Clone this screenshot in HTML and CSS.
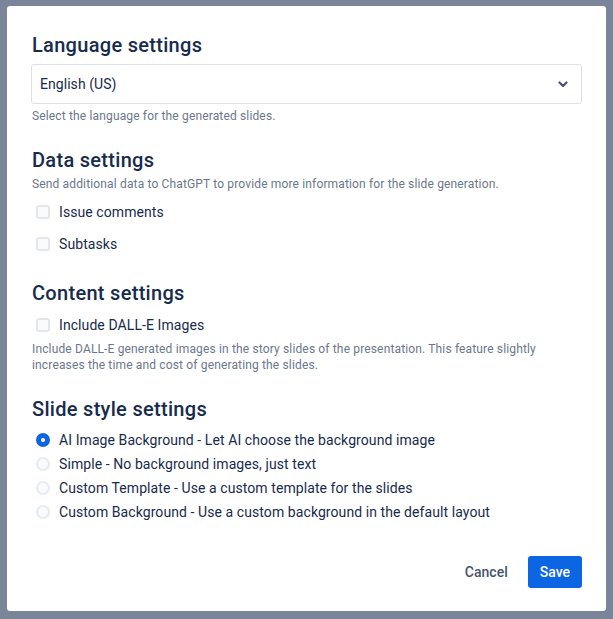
FILE: index.html
```html
<!DOCTYPE html>
<html lang="en">
<head>
<meta charset="utf-8">
<title>Settings</title>
<link rel="stylesheet" href="styles.css">
</head>
<body>
<div class="modal">
  <div class="modal-body">
    <h2 class="section-title first">Language settings</h2>
    <div class="select">
      <span class="select-value">English (US)</span>
      <svg class="chevron" width="10" height="7" viewBox="0 0 10 7"><path d="M1.5 1.5 L5 5 L8.5 1.5" fill="none" stroke="#44546f" stroke-width="2.2" stroke-linecap="round" stroke-linejoin="round"/></svg>
    </div>
    <p class="helper">Select the language for the generated slides.</p>

    <h2 class="section-title">Data settings</h2>
    <p class="desc">Send additional data to ChatGPT to provide more information for the slide generation.</p>
    <div class="checks">
      <label class="check-row"><span class="box"></span><span class="label">Issue comments</span></label>
      <label class="check-row"><span class="box"></span><span class="label">Subtasks</span></label>
    </div>

    <h2 class="section-title content">Content settings</h2>
    <div class="checks tight">
      <label class="check-row"><span class="box"></span><span class="label">Include DALL-E Images</span></label>
    </div>
    <p class="desc no-gap">Include DALL-E generated images in the story slides of the presentation. This feature slightly increases the time and cost of generating the slides.</p>

    <h2 class="section-title">Slide style settings</h2>
    <div class="radios">
      <label class="radio-row"><span class="radio checked"></span><span class="label">AI Image Background - Let AI choose the background image</span></label>
      <label class="radio-row"><span class="radio"></span><span class="label">Simple - No background images, just text</span></label>
      <label class="radio-row"><span class="radio"></span><span class="label">Custom Template - Use a custom template for the slides</span></label>
      <label class="radio-row"><span class="radio"></span><span class="label">Custom Background - Use a custom background in the default layout</span></label>
    </div>
  </div>
  <div class="modal-footer">
    <button class="btn btn-subtle">Cancel</button>
    <button class="btn btn-primary">Save</button>
  </div>
</div>
</body>
</html>
```
FILE: styles.css
```css
* { box-sizing: border-box; }

html, body {
  margin: 0;
  padding: 0;
}

body {
  background: #7a8599;
  font-family: Roboto, "Noto Sans", "Liberation Sans", sans-serif;
  color: #172b4d;
  width: 613px;
  height: 619px;
  overflow: hidden;
}

.modal {
  margin: 6px 0 0 7px;
  width: 599px;
  height: 605px;
  background: #ffffff;
  border-radius: 3px;
  padding: 27px 24px 0 24px;
  display: flex;
  flex-direction: column;
}

.section-title {
  margin: 24px 0 0 0;
  font-size: 20px;
  line-height: 24px;
  font-weight: 500;
  color: #172b4d;
  padding-left: 1px;
  letter-spacing: 0.3px;
}

.section-title.first { margin-top: 0; }
.section-title.content { margin-top: 21px; }

.select {
  margin-top: 7px;
  height: 40px;
  border: 1px solid #dcdfe4;
  border-radius: 3px;
  background: #ffffff;
  display: flex;
  align-items: center;
  justify-content: space-between;
  padding: 0 13px 0 8px;
}

.select-value {
  font-size: 14px;
  color: #172b4d;
  letter-spacing: 0.05px;
}

.chevron { display: block; }

.helper, .desc {
  margin: 4px 0 0 0;
  font-size: 12px;
  line-height: 16px;
  color: #6b778c;
  padding-left: 1px;
  letter-spacing: 0.15px;
}

.desc.no-gap { margin-top: 0; }

.checks {
  margin-top: 4px;
  display: flex;
  flex-direction: column;
}

.check-row {
  height: 32px;
  display: flex;
  align-items: center;
  padding-left: 5px;
  gap: 9px;
}

.box {
  width: 14px;
  height: 14px;
  border: 2px solid #e4e6ea;
  background: #fafbfc;
  border-radius: 3px;
  flex: none;
}

.label {
  font-size: 14px;
  line-height: 20px;
  color: #172b4d;
  letter-spacing: 0.08px;
}

.radios {
  margin-top: 7px;
  display: flex;
  flex-direction: column;
}

.radio-row {
  height: 24px;
  display: flex;
  align-items: center;
  padding-left: 5px;
  gap: 9px;
}

.radio {
  width: 14px;
  height: 14px;
  border-radius: 50%;
  border: 2px solid #e9ebee;
  background: #fafbfc;
  flex: none;
  position: relative;
}

.radio.checked {
  background: #0c66e4;
  border-color: #0c66e4;
}

.radio.checked::after {
  content: "";
  position: absolute;
  left: 3px;
  top: 3px;
  width: 4px;
  height: 4px;
  border-radius: 50%;
  background: #ffffff;
}

.modal-footer {
  margin-top: 32px;
  display: flex;
  justify-content: flex-end;
  gap: 8px;
}

.btn {
  height: 32px;
  padding: 0 12px;
  border: none;
  border-radius: 3px;
  font-family: inherit;
  font-size: 14px;
  font-weight: 500;
  cursor: pointer;
}

.btn-subtle {
  background: transparent;
  color: #44546f;
}

.btn-primary {
  background: #0c66e4;
  color: #ffffff;
}
```
